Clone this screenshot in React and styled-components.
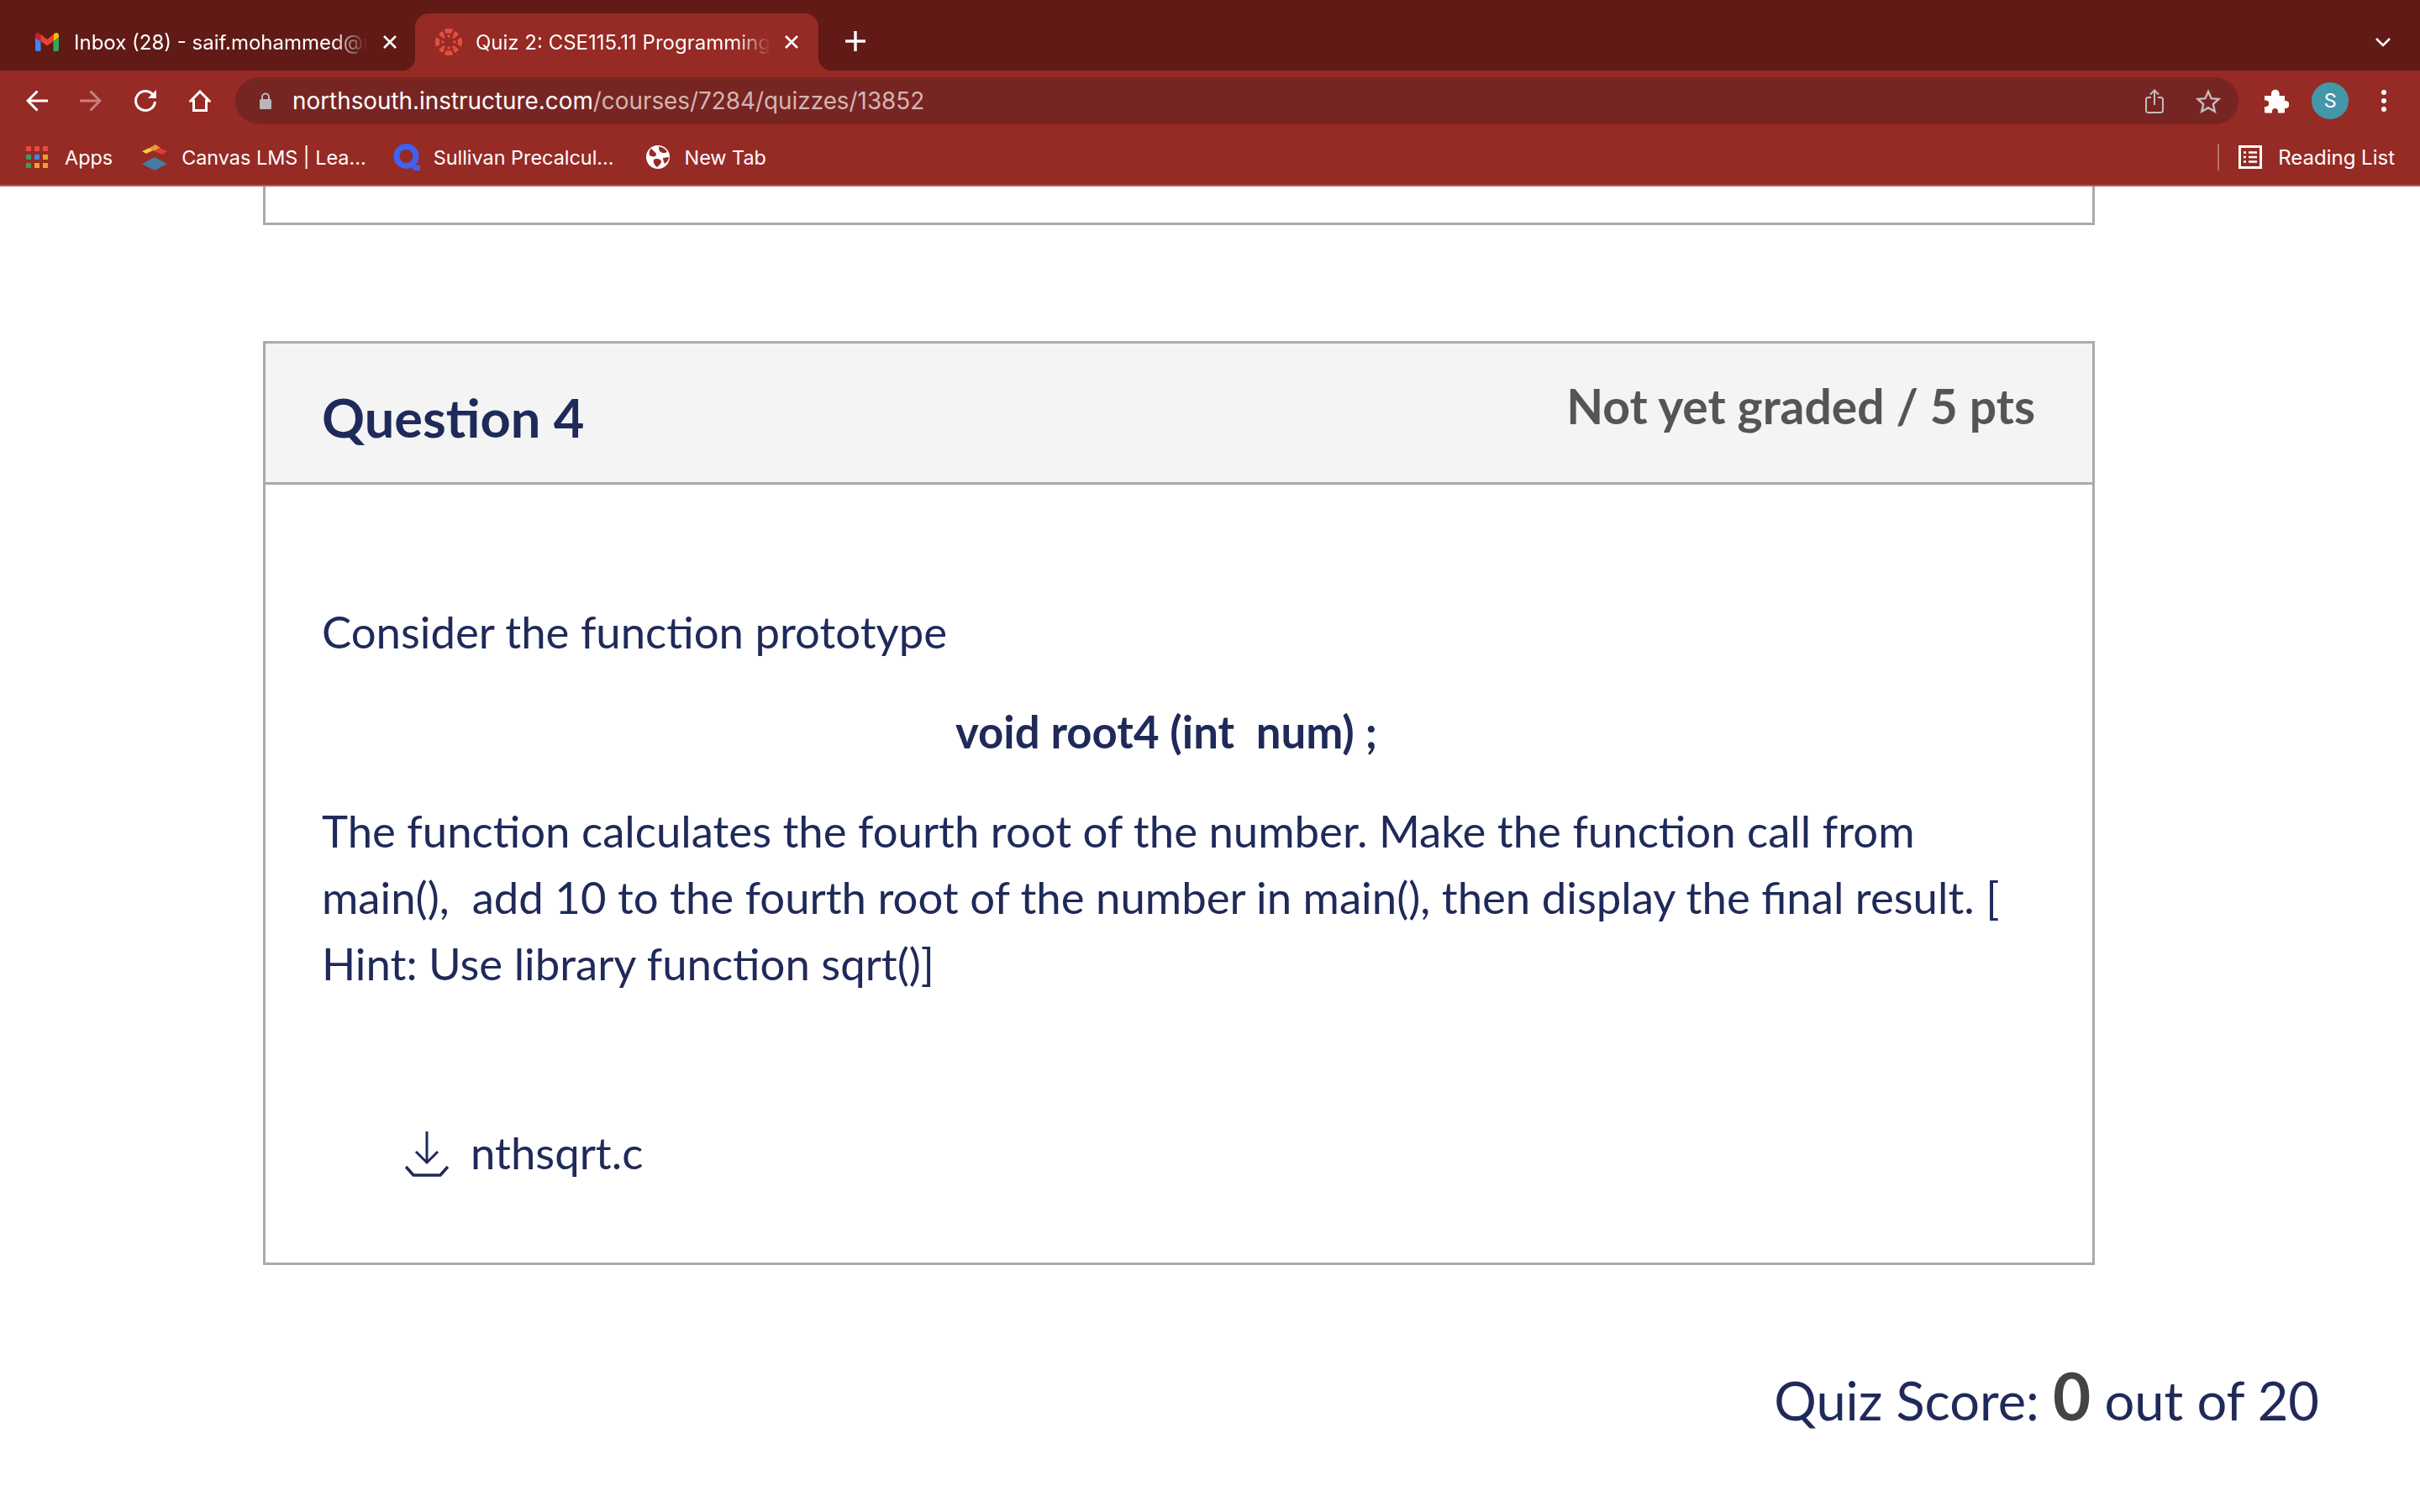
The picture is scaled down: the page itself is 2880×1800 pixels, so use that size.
import React from "react";
import styled, { createGlobalStyle } from "styled-components";

const Global = createGlobalStyle`
  html, body { margin: 0; padding: 0; background: #fff; }
  * { box-sizing: border-box; }
`;

const Page = styled.div`
  width: 2880px;
  height: 1800px;
  overflow: hidden;
  background: #fff;
  display: flex;
  flex-direction: column;
  font-family: Lato, "Liberation Sans", sans-serif;
`;

const Chrome = styled.header`
  flex: none;
  display: flex;
  flex-direction: column;
  font-family: Inter, "Liberation Sans", sans-serif;
  color: #fff;
  border-bottom: 2px solid #b55f5a;
`;

const TabStrip = styled.div`
  height: 84px;
  background: #611a16;
  display: flex;
  align-items: flex-end;
  padding-left: 16px;
`;

const Tab = styled.div`
  position: relative;
  width: ${(p) => (p.$active ? "480px" : "478px")};
  height: 68px;
  padding: ${(p) => (p.$active ? "0 23px 0 24px" : "0 21px 0 26px")};
  display: flex;
  align-items: center;
  gap: ${(p) => (p.$active ? "16px" : "18px")};
  background: ${(p) => (p.$active ? "#962a24" : "transparent")};
  border-radius: 16px 16px 0 0;
  ${(p) =>
    p.$active &&
    `
    &::before, &::after {
      content: "";
      position: absolute;
      bottom: 0;
      width: 16px;
      height: 16px;
    }
    &::before { left: -16px; background: radial-gradient(circle at 0 0, transparent 16px, #962a24 16.5px); }
    &::after { right: -16px; background: radial-gradient(circle at 100% 0, transparent 16px, #962a24 16.5px); }
  `}
`;

const TabTitle = styled.span`
  flex: 1;
  min-width: 0;
  overflow: hidden;
  white-space: nowrap;
  font-size: 24px;
  -webkit-mask-image: linear-gradient(to right, #000 88%, transparent 100%);
  mask-image: linear-gradient(to right, #000 88%, transparent 100%);
`;

const NewTab = styled.div`
  margin-left: 32px;
  height: 68px;
  display: flex;
  align-items: center;
  padding-bottom: 2px;
`;

const StripEnd = styled.div`
  margin-left: auto;
  height: 68px;
  width: 53px;
  display: flex;
  align-items: center;
`;

const Toolbar = styled.div`
  height: 64px;
  background: #962a24;
  display: flex;
  align-items: center;
  padding: 8px 0 0 31px;
`;

const NavIcons = styled.div`
  display: flex;
  align-items: center;
  gap: 38px;
  width: 249px;
  flex: none;
`;

const AddressBar = styled.div`
  width: 2384px;
  height: 56px;
  background: #772523;
  border-radius: 28px;
  display: flex;
  align-items: center;
  padding: 0 21px 0 29px;
`;

const Url = styled.div`
  margin-left: 25px;
  flex: 1;
  font-size: 27.85px;
  white-space: nowrap;
`;

const UrlPath = styled.span`
  color: #d5b5b3;
`;

const AddressActions = styled.div`
  display: flex;
  align-items: center;
  gap: 38px;
`;

const ToolActions = styled.div`
  display: flex;
  align-items: center;
  margin-left: 30px;
  flex: none;
`;

const Avatar = styled.div`
  width: 44px;
  height: 44px;
  border-radius: 50%;
  background: #4397a9;
  display: flex;
  align-items: center;
  justify-content: center;
  font-family: Roboto, sans-serif;
  font-size: 24px;
  margin: 0 39px 0 27px;
`;

const Bookmarks = styled.div`
  height: 72px;
  background: #962a24;
  display: flex;
  align-items: center;
  padding: 6px 30px 0 31px;
  font-size: 23.4px;
`;

const Bookmark = styled.div`
  display: flex;
  align-items: center;
  gap: ${(p) => p.$gap || 17}px;
  margin-right: ${(p) => p.$after || 34}px;
  white-space: nowrap;
`;

const ReadingList = styled.div`
  margin-left: auto;
  height: 32px;
  display: flex;
  align-items: center;
  gap: 19px;
  border-left: 2px solid #b9706b;
  padding-left: 23px;
  white-space: nowrap;
  font-size: 24px;
`;

const Content = styled.main`
  flex: 1;
  padding-left: 313px;
  color: #1f2a5a;
`;

const PrevBox = styled.div`
  width: 2180px;
  height: 46px;
  border: 3px solid #aaa;
  border-top: 0;
  margin-bottom: 138px;
`;

const QuestionBox = styled.section`
  width: 2180px;
  height: 1100px;
  border: 3px solid #aaa;
  display: flex;
  flex-direction: column;
`;

const QuestionHead = styled.div`
  height: 168px;
  background: #f4f4f4;
  border-bottom: 3px solid #aaa;
  display: flex;
  justify-content: space-between;
  padding: 0 68px 0 67px;
  flex: none;
`;

const QuestionName = styled.h2`
  margin: 43px 0 0;
  font-size: 63.2px;
  line-height: 90px;
  font-weight: 700;
  color: #1f2a5a;
`;

const Points = styled.div`
  margin-top: 32px;
  font-size: 57px;
  line-height: 84px;
  font-weight: 700;
  color: #555;
`;

const QuestionBody = styled.div`
  padding: 135px 67px 0;
  font-size: 52.7px;
  line-height: 79px;
`;

const Para = styled.p`
  margin: 0 0 40px;
`;

const CodeLine = styled.p`
  margin: 0 0 39px;
  padding-right: 30px;
  text-align: center;
  font-weight: 700;
`;

const FileLink = styled.div`
  margin: 146px 0 0 99px;
  display: flex;
  align-items: center;
  gap: 26px;
`;

const FileIcon = styled.span`
  display: block;
  padding-top: 4px;
`;

const ScoreRow = styled.div`
  width: 2447px;
  margin-top: 107px;
  text-align: right;
  font-size: 63.2px;
  line-height: 96px;
  color: #1f2a5a;
`;

const ScoreValue = styled.b`
  font-size: 78px;
  color: #444;
`;

const Ic = ({ w, h, children, vb, style }) => (
  <svg
    width={w}
    height={h}
    viewBox={vb || `0 0 ${w} ${h}`}
    fill="none"
    style={{ flex: "none", display: "block", ...style }}
  >
    {children}
  </svg>
);

const Gmail = () => (
  <Ic w={28} h={22}>
    <path d="M0 6 V19.5 A2.5 2.5 0 0 0 2.5 22 H6.5 V9 Z" fill="#4285f4" />
    <path d="M21.5 22 H25.5 A2.5 2.5 0 0 0 28 19.5 V6 L21.5 10 Z" fill="#34a853" />
    <path d="M21.5 2 V10 L28 5.5 V3 C28 0.5 25 -0.8 23 0.8 Z" fill="#fbbc04" />
    <path d="M0 3 V6 L6.5 10.5 V2 L5 0.8 C3 -0.8 0 0.5 0 3 Z" fill="#c5221f" />
    <path d="M6.5 2 L14 8 L21.5 2 V10 L14 15.5 L6.5 10 Z" fill="#ea4335" />
  </Ic>
);

const CanvasTab = () => (
  <Ic w={32} h={32} vb="0 0 32 32">
    <g fill="#e2503f">
      <path d="M10.5 1 A16 16 0 0 1 21.5 1 L19 6 A11 11 0 0 0 13 6 Z" />
      <path d="M10.5 31 A16 16 0 0 0 21.5 31 L19 26 A11 11 0 0 1 13 26 Z" />
      <path d="M1 10.5 A16 16 0 0 0 1 21.5 L5.5 19 A11 11 0 0 1 5.5 13 Z" />
      <path d="M31 10.5 A16 16 0 0 1 31 21.5 L26.5 19 A11 11 0 0 0 26.5 13 Z" />
      <path d="M4 7 A16 16 0 0 1 8.5 3 L11 7.5 A11 11 0 0 0 8 10.5 Z" />
      <path d="M28 7 A16 16 0 0 0 23.5 3 L21 7.5 A11 11 0 0 1 24 10.5 Z" />
      <path d="M4 25 A16 16 0 0 0 8.5 29 L11 24.5 A11 11 0 0 1 8 21.5 Z" />
      <path d="M28 25 A16 16 0 0 1 23.5 29 L21 24.5 A11 11 0 0 0 24 21.5 Z" />
      <circle cx="16" cy="9" r="1.7" />
      <circle cx="16" cy="23" r="1.7" />
      <circle cx="9" cy="16" r="1.7" />
      <circle cx="23" cy="16" r="1.7" />
      <circle cx="10" cy="10" r="1.7" />
      <circle cx="22" cy="10" r="1.7" />
      <circle cx="10" cy="22" r="1.7" />
      <circle cx="22" cy="22" r="1.7" />
    </g>
  </Ic>
);

const Close = () => (
  <Ic w={18} h={18}>
    <path d="M2 2 L16 16 M16 2 L2 16" stroke="#fff" strokeWidth="2.6" />
  </Ic>
);

const Back = ({ color = "#fff", flip }) => (
  <Ic w={26} h={26} style={flip ? { transform: "scaleX(-1)" } : undefined}>
    <path d="M26 13 H3 M13.5 1.5 L2 13 L13.5 24.5" stroke={color} strokeWidth="3" />
  </Ic>
);

const Reload = () => (
  <Ic w={28} h={28}>
    <path d="M23.5 7.5 A11.5 11.5 0 1 0 25.5 15" stroke="#fff" strokeWidth="3" />
    <path d="M27 1 V11 H17 Z" fill="#fff" />
  </Ic>
);

const Home = () => (
  <Ic w={26} h={26}>
    <path d="M13 2 L24 13 H20.5 V24.5 H5.5 V13 H2 Z" stroke="#fff" strokeWidth="3" strokeLinejoin="miter" />
  </Ic>
);

const Lock = () => (
  <Ic w={14} h={20}>
    <rect x="0" y="8" width="14" height="12" rx="1.5" fill="#b8b8ba" />
    <path d="M3 9 V5.5 A4 4 0 0 1 11 5.5 V9" stroke="#b8b8ba" strokeWidth="2" />
  </Ic>
);

const Share = () => (
  <Ic w={22} h={29}>
    <path d="M7 10 H3.5 A2.5 2.5 0 0 0 1 12.5 V25.5 A2.5 2.5 0 0 0 3.5 28 H18.5 A2.5 2.5 0 0 0 21 25.5 V12.5 A2.5 2.5 0 0 0 18.5 10 H15" stroke="#c4bcbc" strokeWidth="2" />
    <path d="M11 19 V2 M6 6.5 L11 1.5 L16 6.5" stroke="#c4bcbc" strokeWidth="2" />
  </Ic>
);

const Star = () => (
  <Ic w={30} h={29}>
    <path d="M15 3 L18.6 11.2 L27.5 12 L20.8 18 L22.8 26.7 L15 22.1 L7.2 26.7 L9.2 18 L2.5 12 L11.4 11.2 Z" stroke="#c4bcbc" strokeWidth="2.4" strokeLinejoin="miter" />
  </Ic>
);

const Puzzle = () => (
  <Ic w={30} h={29}>
    <path d="M1 8 H9 V5.5 A4.8 4.8 0 0 1 18.6 5.5 V8 H25 V14 H26 A4.5 4.5 0 0 1 26 23 H25 V27 A1.5 1.5 0 0 1 23.5 28.5 H17 V26.5 A3.5 3.5 0 0 0 10 26.5 V28.5 H2.5 A1.5 1.5 0 0 1 1 27 V21 H3 A3.8 3.8 0 0 0 3 13.5 H1 Z" fill="#fff" />
  </Ic>
);

const Dots = () => (
  <Ic w={6} h={26}>
    <circle cx="3" cy="3" r="3" fill="#fff" />
    <circle cx="3" cy="13" r="3" fill="#fff" />
    <circle cx="3" cy="23" r="3" fill="#fff" />
  </Ic>
);

const AppsGrid = () => {
  const colors = ["#e8463f", "#e8463f", "#e8463f", "#3f9c5a", "#4285f4", "#eba02e", "#3f9c5a", "#eba02e", "#eba02e"];
  return (
    <Ic w={26} h={26}>
      {colors.map((c, i) => (
        <rect key={i} x={(i % 3) * 10} y={Math.floor(i / 3) * 10} width="6" height="6" fill={c} />
      ))}
    </Ic>
  );
};

const CanvasLms = () => (
  <Ic w={30} h={32}>
    <path d="M0 9 L9 5 L13 8 L5 12 Z" fill="#f4cb3a" />
    <path d="M9 5 L16 1 L22 5 L14 9 Z" fill="#ee9638" />
    <path d="M15 9 L21 5 L30 9 L24 13 Z" fill="#df3d34" />
    <path d="M15 16 L30 24 L15 32 L0 24 Z" fill="#437da5" />
  </Ic>
);

const QIcon = () => (
  <Ic w={32} h={32}>
    <circle cx="15.5" cy="15" r="11.5" stroke="#3f62f1" strokeWidth="7" />
    <path d="M21 22 H26 V25.5 H32 V32 H24 Z" fill="#3f62f1" />
  </Ic>
);

const Globe = () => (
  <Ic w={28} h={28}>
    <circle cx="14" cy="14" r="14" fill="#fff" />
    <path d="M6 3.5 C8 7 12 8 12 11 C12 14 7 14 4 12 C3 9 4 6 6 3.5 Z" fill="#962a24" />
    <path d="M15 1.5 C19 2 23 4 25 8 C22 10 18 9 16 7 C15 5 15 3 15 1.5 Z" fill="#962a24" />
    <path d="M9 17 C12 15 17 16 18 19 C18 22 15 24 13 26 C10 24 8 20 9 17 Z" fill="#962a24" />
    <path d="M20 15 L27 14 C27 17 25 20 22 22 C21 20 20 17 20 15 Z" fill="#962a24" />
  </Ic>
);

const ReadingIcon = () => (
  <Ic w={28} h={28}>
    <rect x="1.5" y="1.5" width="25" height="25" stroke="#fff" strokeWidth="3" />
    <path d="M6 8.5 H9 M12 8.5 H22 M6 14 H9 M12 14 H22 M6 19.5 H9 M12 19.5 H22" stroke="#fff" strokeWidth="2.4" />
  </Ic>
);

const Plus = () => (
  <Ic w={24} h={24}>
    <path d="M12 0 V24 M0 12 H24" stroke="#fff" strokeWidth="3.4" />
  </Ic>
);

const Chevron = () => (
  <Ic w={18} h={11}>
    <path d="M1 1 L9 9 L17 1" stroke="#fff" strokeWidth="2.6" />
  </Ic>
);

const Download = () => (
  <Ic w={52} h={54}>
    <path d="M26 0 V36 M13 24 L26 37 L39 24" stroke="#1f2a5a" strokeWidth="3" />
    <path d="M1 42 L10 52 H42 L51 42" stroke="#1f2a5a" strokeWidth="3.6" />
  </Ic>
);

export default function App() {
  return (
    <Page>
      <Global />
      <Chrome>
        <TabStrip>
          <Tab>
            <Gmail />
            <TabTitle>Inbox (28) - saif.mohammed@northsouth.edu</TabTitle>
            <Close />
          </Tab>
          <Tab $active>
            <CanvasTab />
            <TabTitle>Quiz 2: CSE115.11 Programming Language I</TabTitle>
            <Close />
          </Tab>
          <NewTab>
            <Plus />
          </NewTab>
          <StripEnd>
            <Chevron />
          </StripEnd>
        </TabStrip>
        <Toolbar>
          <NavIcons>
            <Back />
            <Back flip color="#c9807c" />
            <Reload />
            <Home />
          </NavIcons>
          <AddressBar>
            <Lock />
            <Url>
              northsouth.instructure.com<UrlPath>/courses/7284/quizzes/13852</UrlPath>
            </Url>
            <AddressActions>
              <Share />
              <Star />
            </AddressActions>
          </AddressBar>
          <ToolActions>
            <Puzzle />
            <Avatar>S</Avatar>
            <Dots />
          </ToolActions>
        </Toolbar>
        <Bookmarks>
          <Bookmark $gap={20} $after={35}>
            <AppsGrid />
            Apps
          </Bookmark>
          <Bookmark $gap={17} $after={32}>
            <CanvasLms />
            Canvas LMS | Lea...
          </Bookmark>
          <Bookmark $gap={16} $after={38}>
            <QIcon />
            Sullivan Precalcul...
          </Bookmark>
          <Bookmark $gap={18}>
            <Globe />
            New Tab
          </Bookmark>
          <ReadingList>
            <ReadingIcon />
            Reading List
          </ReadingList>
        </Bookmarks>
      </Chrome>
      <Content>
        <PrevBox />
        <QuestionBox>
          <QuestionHead>
            <QuestionName>Question 4</QuestionName>
            <Points>Not yet graded / 5 pts</Points>
          </QuestionHead>
          <QuestionBody>
            <Para>Consider the function prototype</Para>
            <CodeLine>void root4 (int{"\u00A0 "}num) ;</CodeLine>
            <Para>
              The function calculates the fourth root of the number. Make the function call from main(),{"\u00A0 "}add 10 to
              the fourth root of the number in main(), then display the final result. [ Hint: Use library function sqrt()]
            </Para>
            <FileLink>
              <FileIcon>
                <Download />
              </FileIcon>
              nthsqrt.c
            </FileLink>
          </QuestionBody>
        </QuestionBox>
        <ScoreRow>
          Quiz Score: <ScoreValue>0</ScoreValue> out of 20
        </ScoreRow>
      </Content>
    </Page>
  );
}
